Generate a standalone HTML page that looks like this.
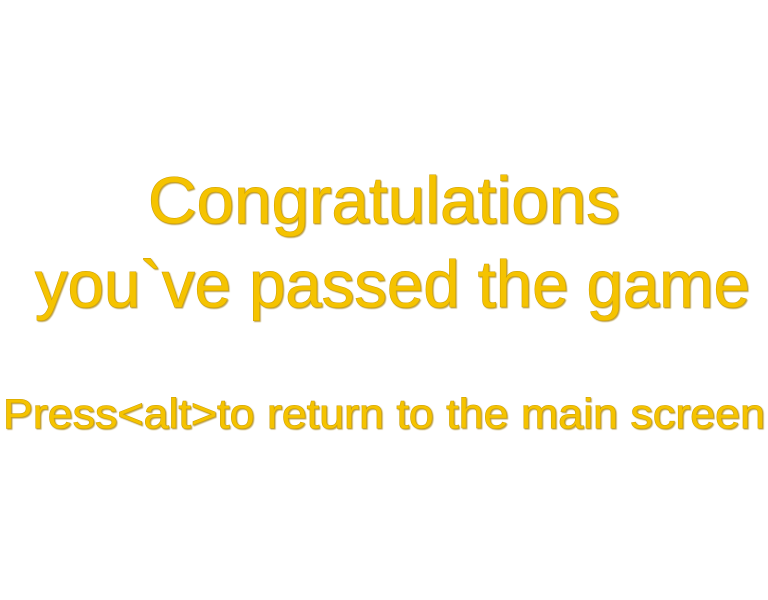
<!DOCTYPE html>
<html><head><meta charset="utf-8"><style>
html,body{margin:0;padding:0;background:#fff;width:768px;height:600px;overflow:hidden}
svg text{font-family:"Liberation Sans",sans-serif;fill:#f5c300;stroke:#c99b00;stroke-width:1;paint-order:stroke}
</style></head><body>
<svg width="768" height="600" viewBox="0 0 768 600" xmlns="http://www.w3.org/2000/svg">
<defs><filter id="b"><feDropShadow dx="1" dy="1" stdDeviation="0.6" flood-color="#a07800" flood-opacity="0.7"/></filter></defs>
<g filter="url(#b)">
<text x="148" y="223" font-size="66" textLength="472" lengthAdjust="spacingAndGlyphs">Congratulations</text>
<text x="35" y="307" font-size="66" textLength="715" lengthAdjust="spacingAndGlyphs">you`ve passed the game</text>
<text x="3" y="428" font-size="42" textLength="762" lengthAdjust="spacingAndGlyphs">Press&lt;alt&gt;to return to the main screen</text>
</g>
</svg>
</body></html>
